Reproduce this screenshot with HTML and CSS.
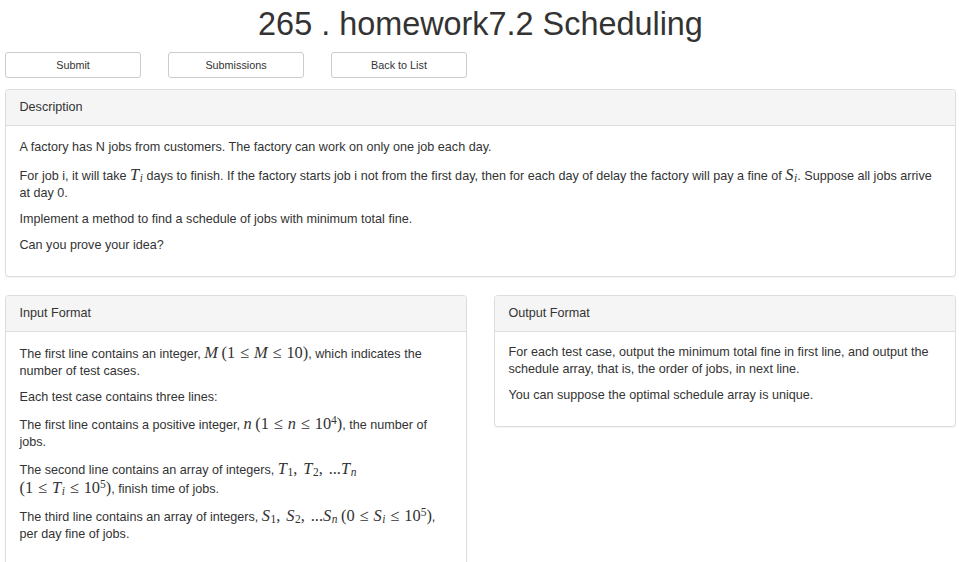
FILE: index.html
```html
<!DOCTYPE html>
<html lang="en">
<head>
<meta charset="utf-8">
<title>265 . homework7.2 Scheduling</title>
<link rel="stylesheet" href="styles.css">
</head>
<body>
<div class="page">
  <h1 class="title">265 . homework7.2 Scheduling</h1>
  <div class="actions">
    <button class="btn">Submit</button>
    <button class="btn">Submissions</button>
    <button class="btn">Back to List</button>
  </div>

  <div class="panel">
    <div class="panel-heading">Description</div>
    <div class="panel-body">
      <p>A factory has N jobs from customers. The factory can work on only one job each day.</p>
      <p class="tall">For job i, it will take <span class="math"><i>T</i><sub><i>i</i></sub></span> days to finish. If the factory starts job i not from the first day, then for each day of delay the factory will pay a fine of <span class="math"><i>S</i><sub><i>i</i></sub></span>. Suppose all jobs arrive at day 0.</p>
      <p>Implement a method to find a schedule of jobs with minimum total fine.</p>
      <p>Can you prove your idea?</p>
    </div>
  </div>

  <div class="columns">
    <div class="panel">
      <div class="panel-heading">Input Format</div>
      <div class="panel-body">
        <p>The first line contains an integer, <span class="math"><i>M</i></span> <span class="math">(1<span class="rel">≤</span><i>M</i><span class="rel">≤</span>10)</span>, which indicates the number of test cases.</p>
        <p>Each test case contains three lines:</p>
        <p>The first line contains a positive integer, <span class="math"><i>n</i></span> <span class="math">(1<span class="rel">≤</span><i>n</i><span class="rel">≤</span>10<sup>4</sup>)</span>, the number of jobs.</p>
        <p>The second line contains an array of integers, <span class="math"><i>T</i><sub>1</sub>,<span class="th"></span><i>T</i><sub>2</sub>,<span class="th"></span>...<i>T</i><sub><i>n</i></sub></span> <span class="math">(1<span class="rel">≤</span><i>T</i><sub><i>i</i></sub><span class="rel">≤</span>10<sup>5</sup>)</span>, finish time of jobs.</p>
        <p>The third line contains an array of integers, <span class="math"><i>S</i><sub>1</sub>,<span class="th"></span><i>S</i><sub>2</sub>,<span class="th"></span>...<i>S</i><sub><i>n</i></sub></span> <span class="math">(0<span class="rel">≤</span><i>S</i><sub><i>i</i></sub><span class="rel">≤</span>10<sup>5</sup>)</span>, per day fine of jobs.</p>
      </div>
    </div>
    <div class="panel">
      <div class="panel-heading">Output Format</div>
      <div class="panel-body">
        <p>For each test case, output the minimum total fine in first line, and output the schedule array, that is, the order of jobs, in next line.</p>
        <p>You can suppose the optimal schedule array is unique.</p>
      </div>
    </div>
  </div>
</div>
</body>
</html>
```

FILE: styles.css
```css
* { box-sizing: border-box; }
html, body { margin: 0; padding: 0; background: #fff; }
body {
  font-family: "Liberation Sans", Arial, sans-serif;
  font-size: 12.6px;
  line-height: 17px;
  color: #333;
}
.page {
  padding: 6px 3px 0 5px;
}
.title {
  margin: 0;
  font-size: 32.4px;
  line-height: 36px;
  font-weight: 500;
  text-align: center;
  color: #333;
}
.actions {
  display: grid;
  grid-template-columns: 136px 136px 136px;
  column-gap: 27px;
  margin-top: 10px;
  margin-bottom: 11px;
}
.btn {
  height: 26px;
  padding: 0 9px;
  background: #fff;
  border: 1px solid #ccc;
  border-radius: 3px;
  font-family: "Liberation Sans", Arial, sans-serif;
  font-size: 10.8px;
  line-height: 15px;
  color: #333;
}
.panel {
  border: 1px solid #ddd;
  border-radius: 3.6px;
  background: #fff;
  box-shadow: 0 1px 1px rgba(0, 0, 0, 0.05);
  margin-bottom: 18px;
}
.panel-heading {
  background: #f5f5f5;
  border-bottom: 1px solid #ddd;
  border-radius: 3px 3px 0 0;
  padding: 9px 13.5px;
  line-height: 17px;
}
.panel-body {
  padding: 12.5px 13.5px 13px;
}
.panel-body p {
  margin: 0 0 9px;
}
.columns {
  display: grid;
  grid-template-columns: 1fr 1fr;
  column-gap: 27px;
  align-items: start;
}
.math {
  font-family: "Liberation Serif", "DejaVu Serif", serif;
  font-size: 16.4px;
  line-height: 17px;
  white-space: nowrap;
}
.tall .math { line-height: 19px; }
.math i { font-style: italic; }
.math sub, .math sup {
  font-size: 0.7em;
  line-height: 0;
}
.math sub { vertical-align: -0.2em; margin-left: 0.05em; }
.math sup { vertical-align: 0.45em; }
.rel { margin: 0 0.3em; }
.th { display: inline-block; width: 0.36em; }
```
